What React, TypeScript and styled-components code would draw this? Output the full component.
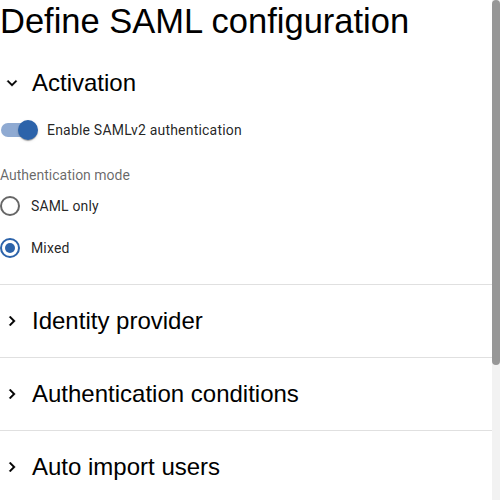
import React from "react";
import styled, { createGlobalStyle } from "styled-components";

const Global = createGlobalStyle`
  html, body { margin: 0; height: 100%; overflow: hidden; }
  body {
    background: #fff;
    font-family: Roboto, "Liberation Sans", Arial, sans-serif;
    color: rgba(0,0,0,0.87);
  }
`;

const Viewport = styled.div`
  display: flex;
  height: 100vh;
`;

const Scroller = styled.div`
  flex: 1;
  min-width: 0;
  overflow-y: auto;
  scrollbar-width: none;
  &::-webkit-scrollbar { display: none; }
`;

const ScrollRail = styled.div`
  flex: 0 0 8px;
  display: flex;
  flex-direction: column;
  background: #f2f2f2;
`;

const ScrollThumb = styled.div`
  height: 365px;
  border-radius: 4px;
  background: #979797;
`;

const Page = styled.div`
  display: flex;
  flex-direction: column;
  padding-bottom: 182px;
`;

const Title = styled.h1`
  margin: 0 0 5px 0;
  font-family: "Liberation Sans", Arial, sans-serif;
  font-weight: 400;
  font-size: 34.5px;
  line-height: 42px;
  color: #000;
  white-space: nowrap;
`;

const Section = styled.section<{ $last?: boolean }>`
  display: flex;
  flex-direction: column;
  border-bottom: ${(p) => (p.$last ? "none" : "1px solid #e0e0e0")};
`;

const SectionHeader = styled.div`
  display: flex;
  align-items: center;
  gap: 8px;
  height: 72px;
  cursor: pointer;
`;

const IconSlot = styled.span`
  display: flex;
  align-items: center;
  justify-content: center;
  width: 24px;
  height: 24px;
  color: #000;
`;

const SectionTitle = styled.h2`
  margin: 0;
  font-family: "Liberation Sans", Arial, sans-serif;
  font-weight: 400;
  font-size: 24px;
  line-height: normal;
  color: #000;
`;

const SectionBody = styled.div`
  display: flex;
  flex-direction: column;
  padding-bottom: 15px;
`;

const SwitchRow = styled.label`
  display: flex;
  align-items: center;
  gap: 12px;
  height: 22px;
  font-size: 14px;
  letter-spacing: 0.2px;
  color: rgba(0,0,0,0.87);
`;

const SwitchTrack = styled.span`
  position: relative;
  display: block;
  width: 34px;
  height: 14px;
  border-radius: 7px;
  margin-left: 1px;
  background: #8faad2;
`;

const SwitchThumb = styled.span`
  position: absolute;
  top: -3px;
  left: 17px;
  width: 20px;
  height: 20px;
  border-radius: 50%;
  background: #2c63aa;
  box-shadow: 0 2px 1px -1px rgba(0,0,0,0.2), 0 1px 1px 0 rgba(0,0,0,0.14), 0 1px 3px 0 rgba(0,0,0,0.12);
`;

const GroupLabel = styled.div`
  margin-top: 24px;
  font-size: 14px;
  line-height: 20px;
  color: rgba(0,0,0,0.6);
`;

const RadioRow = styled.label`
  display: flex;
  align-items: center;
  gap: 11px;
  height: 42px;
  font-size: 14px;
  letter-spacing: 0.15px;
  color: rgba(0,0,0,0.87);
`;

const Circle = ({ checked }: { checked: boolean }) => (
  <svg width="20" height="20" viewBox="0 0 20 20">
    <circle
      cx="10"
      cy="10"
      r="9"
      fill="none"
      stroke={checked ? "#2c63aa" : "#666"}
      strokeWidth="2"
    />
    {checked && <circle cx="10" cy="10" r="5" fill="#2c63aa" />}
  </svg>
);

const ExpandMore = () => (
  <svg width="20" height="20" viewBox="0 0 24 24" fill="currentColor" stroke="currentColor" strokeWidth="0.4">
    <path d="M16.59 8.59 12 13.17 7.41 8.59 6 10l6 6 6-6z" />
  </svg>
);

const ChevronRight = () => (
  <svg width="20" height="20" viewBox="0 0 24 24" fill="currentColor" stroke="currentColor" strokeWidth="0.4">
    <path d="M10 6 8.59 7.41 13.17 12l-4.58 4.59L10 18l6-6z" />
  </svg>
);

const collapsed = ["Identity provider", "Authentication conditions", "Auto import users"];

export default function App() {
  return (
    <>
      <Global />
      <Viewport>
        <Scroller>
          <Page>
            <Title>Define SAML configuration</Title>
            <Section>
              <SectionHeader>
                <IconSlot>
                  <ExpandMore />
                </IconSlot>
                <SectionTitle>Activation</SectionTitle>
              </SectionHeader>
              <SectionBody>
                <SwitchRow>
                  <SwitchTrack>
                    <SwitchThumb />
                  </SwitchTrack>
                  Enable SAMLv2 authentication
                </SwitchRow>
                <GroupLabel>Authentication mode</GroupLabel>
                <RadioRow>
                  <Circle checked={false} />
                  SAML only
                </RadioRow>
                <RadioRow>
                  <Circle checked={true} />
                  Mixed
                </RadioRow>
              </SectionBody>
            </Section>
            {collapsed.map((t, i) => (
              <Section key={t} $last={i === collapsed.length - 1}>
                <SectionHeader>
                  <IconSlot>
                    <ChevronRight />
                  </IconSlot>
                  <SectionTitle>{t}</SectionTitle>
                </SectionHeader>
              </Section>
            ))}
          </Page>
        </Scroller>
        <ScrollRail>
          <ScrollThumb />
        </ScrollRail>
      </Viewport>
    </>
  );
}
